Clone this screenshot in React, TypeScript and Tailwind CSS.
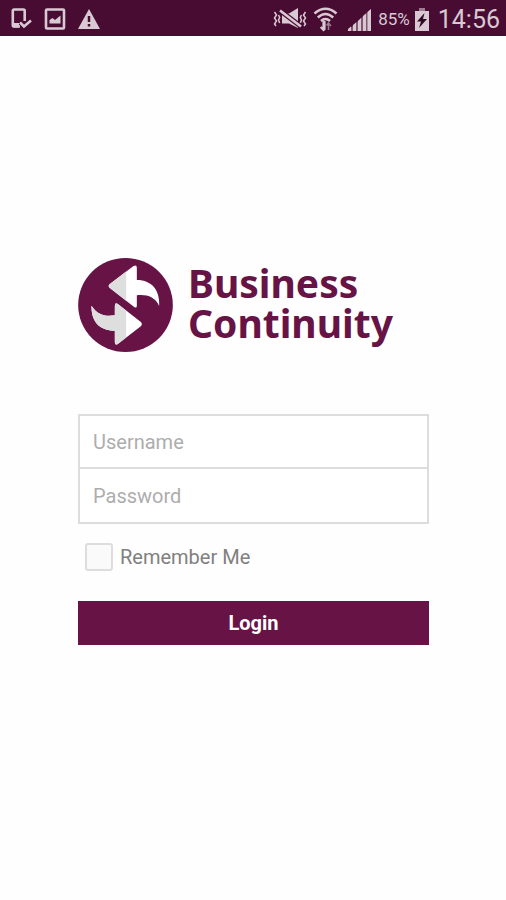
import React from "react";

function StatusBar() {
  return (
    <header className="flex h-9 items-center justify-between bg-[#480c33] pl-[11px] pr-[6px] text-[#d9c9d3]">
      <div className="flex items-center gap-[12px] pt-0.5">
        <svg className="h-[22px] w-[21px]" viewBox="0 0 21 22" fill="none" stroke="currentColor">
          <path d="M9 18.500H3a1.200 1.200 0 0 1-1.200-1.200V2.700A1.200 1.200 0 0 1 3 1.500h9.500a1.200 1.200 0 0 1 1.200 1.200V13" strokeWidth="2.600" />
          <path d="M2 15h6v4.500H2z" fill="currentColor" stroke="none" />
          <path d="M9 14.500l4 4L20 12.500" strokeWidth="2.600" />
        </svg>
        <svg className="h-[22px] w-[22px]" viewBox="0 0 22 22">
          <rect x="2" y="1.500" width="18" height="19" rx="1" fill="none" stroke="currentColor" strokeWidth="2.600" />
          <path d="M5.500 15.500V12l3-2 2.500 2 5.500-4.500v8z" fill="currentColor" />
        </svg>
        <svg className="h-[22px] w-[22px]" viewBox="0 0 22 22">
          <path d="M11 1 L22 21 H0 Z" fill="currentColor" />
          <path d="M11 8v6M11 16v2.500" stroke="#480c33" strokeWidth="2.500" />
        </svg>
      </div>
      <div className="flex items-center pt-0.5">
        <svg className="mr-[6px] h-[22px] w-[34px]" viewBox="0 0 34 22" fill="none" stroke="currentColor">
          <path d="M1.500 4l2 3-2 3 2 3-2 3 1.500 2M5.500 7l1.200 2.500-1.200 2.500 1.200 3M32.500 4l-2 3 2 3-2 3 2 3-1.500 2M28.500 7l-1.200 2.500 1.200 2.500-1.200 3" strokeWidth="1.500" />
          <path d="M9 5.500H16L25 0v20l-9-4.500H9z" fill="currentColor" stroke="none" />
          <path d="M7 2.500L28 18.500" stroke="#480c33" strokeWidth="4.800" />
          <path d="M7 2.500L28 18.500" strokeWidth="2.500" />
        </svg>
        <svg className="mr-[9px] h-[26px] w-[25px]" viewBox="0 0 25 26" fill="none" stroke="currentColor">
          <path d="M1.500 7.500Q12.500-2 23.500 7.500M4.800 11.500Q12.500 4.500 20.200 11.500M8 15Q12.500 11 17 15" strokeWidth="2.500" />
          <path d="M10.500 15v8M7.700 21l2.800 3 1-1V15" strokeWidth="2.200" />
          <path d="M15.500 24v-7M13.500 19.500l2-2.500 2.500 3" strokeWidth="1.500" opacity=".6" />
        </svg>
        <svg className="mr-[7px] h-6 w-6" viewBox="0 0 24 24" fill="currentColor">
          <path d="M0 24L24 2v22z" opacity=".4" />
          <path d="M1 24v-2l3-2.500V24zM6 24v-6l3-2.500V24zM11 24V14l3-3V24zM16 24V9l3-2.500V24zM20.500 24V5L24 2v22z" />
        </svg>
        <span className="font-[Roboto,sans-serif] text-[17px] leading-6">85%</span>
        <svg className="ml-1 mr-2 h-[23px] w-4" viewBox="0 0 16 23">
          <path d="M5 0h6v4H5z" fill="#9d7c91" />
          <path d="M1 3h14v20H1z" fill="currentColor" />
          <path d="M10.500 5L3 13.500h4L5 20l8-9H9z" fill="#2f0821" />
        </svg>
        <span className="pt-0.5 font-[Roboto,sans-serif] text-[25px] leading-8">14:56</span>
      </div>
    </header>
  );
}

function Logo() {
  return (
    <div className="flex items-center gap-[15px]">
      <svg className="h-[94px] w-[95px] shrink-0" viewBox="24 24 284 282">
        <ellipse cx="166" cy="165" rx="142" ry="141" fill="#671346" />
        <path d="M119 102L190 48Q200 43 200 53V90C246 90 270 122 267 168C254 140 230 133 200 136V167Q200 176 192 171L119 114Q112 108 119 102Z" fill="#fff" />
        <path d="M119 102L168 64.700V152L119 114Q112 108 119 102Z" fill="#dedede" />
        <path d="M64 167C82 195 104 200 134 196V168Q134 156 143 162L212 216Q218 222 212 229L143 282Q134 287 134 277V242C88 242 63 214 64 167Z" fill="#fff" />
        <path d="M64 167C82 195 104 200 134 196V168Q134 156 143 162L168 181.600V262.800L143 282Q134 287 134 277V242C88 242 63 214 64 167Z" fill="#dedede" />
      </svg>
      <h1 className="pb-1 font-['Noto_Sans',sans-serif] text-[39px] font-bold leading-10 text-[#671346]">
        <span className="block">Business</span>
        <span className="block">Continuity</span>
      </h1>
    </div>
  );
}

const fieldClass =
  "block h-[53px] w-full px-[13px] font-[Roboto,sans-serif] text-xl text-[#666666] placeholder:text-[#adadad] outline-none";

export default function App() {
  return (
    <div className="min-h-screen bg-[#fefefe] font-[Roboto,sans-serif]">
      <StatusBar />
      <main className="pb-10 pl-[78px] pr-[77px] pt-[222px]">
        <Logo />
        <form className="mt-[62px]" onSubmit={(e) => e.preventDefault()}>
          <div className="divide-y-2 divide-[#dddddd] border-2 border-[#dddddd] bg-white">
            <input className={fieldClass} type="text" placeholder="Username" aria-label="Username" />
            <input className={fieldClass} type="password" placeholder="Password" aria-label="Password" />
          </div>
          <label className="ml-[7px] mt-[19px] flex w-fit items-center gap-[7px] text-xl leading-7 text-[#808080]">
            <input
              type="checkbox"
              className="h-7 w-7 appearance-none rounded-[3px] border-2 border-[#dddddd] bg-[#fafafa] checked:bg-[#671346]"
            />
            Remember Me
          </label>
          <button type="submit" className="mt-[30px] h-11 w-full bg-[#671346] text-xl font-bold text-white">
            Login
          </button>
        </form>
      </main>
    </div>
  );
}
